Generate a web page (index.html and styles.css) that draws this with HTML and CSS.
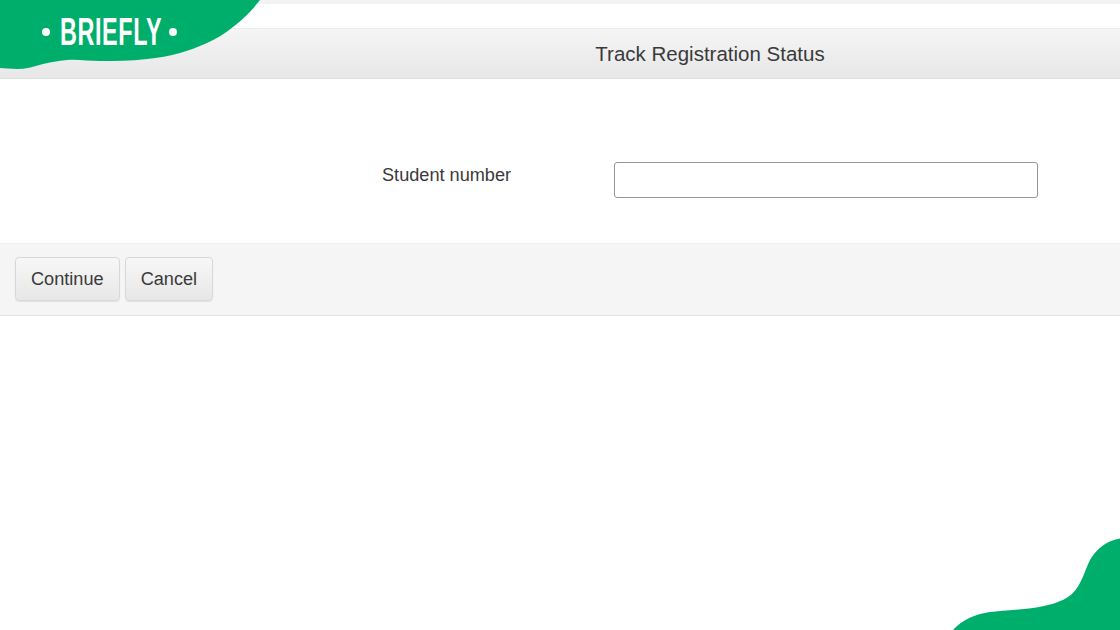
FILE: index.html
```html
<!DOCTYPE html>
<html lang="en">
<head>
<meta charset="utf-8">
<title>Track Registration Status</title>
<link rel="stylesheet" href="styles.css">
</head>
<body>
<div class="top-strip"></div>
<div class="top-gap"></div>
<header class="title-bar"><h1 class="title">Track Registration Status</h1></header>
<main class="form-body">
  <div class="form-row">
    <label class="field-label" for="student">Student number</label>
    <input class="field-input" id="student" type="text">
  </div>
</main>
<footer class="actions">
  <button class="btn" type="button">Continue</button>
  <button class="btn" type="button">Cancel</button>
</footer>

<div class="logo">
  <svg class="logo-shape" width="262" height="72" viewBox="0 0 262 72"><path d="M0 0H260C250 13 241 21 233 27C224 34 216 39 207 43C198 47 190 50 180 53C170 56 158 58 147 59C130 61 115 61 100 61C88 61 78 59 67 60C58 61 50 62 43 64C33 67 25 69 17 69C10 69 5 68 0 68Z" fill="#00ae6b"/></svg>
  <div class="logo-mark"><span class="logo-dot"></span><span class="logo-text">BRIEFLY</span><span class="logo-dot"></span></div>
</div>
<svg class="corner" width="170" height="92" viewBox="0 0 170 92"><path d="M170 .5C155 3 146 12 140 22C134 34 132 46 122 56C112 65 95 68 83 70C65 72 50 73 40 74C25 76 12 82 3 92H170Z" fill="#00ae6b"/></svg>
</body>
</html>
```
FILE: styles.css
```css
* { box-sizing: border-box; }
html, body { margin: 0; padding: 0; }
body {
  width: 1120px;
  height: 630px;
  overflow: hidden;
  position: relative;
  background: #fff;
  color: #3a3a3a;
  font-family: "Liberation Sans", Arial, sans-serif;
}
.top-strip { height: 4px; background: #f3f3f3; }
.top-gap { height: 24px; background: #fff; }
.title-bar {
  height: 51px;
  display: flex;
  align-items: center;
  justify-content: center;
  padding: 1px 0 0 300px;
  border-top: 1px solid #ebebeb;
  border-bottom: 1px solid #dedede;
  background: linear-gradient(#f5f5f5, #e7e7e7);
}
.title { margin: 0; font-size: 20.5px; font-weight: 400; color: #3a3a3a; }
.form-body {
  height: 165px;
  padding: 83px 0 0 382px;
  border-bottom: 1px solid #efefef;
}
.form-row { display: flex; align-items: flex-start; }
.field-label { width: 232px; font-size: 18.15px; line-height: 26px; }
.field-input {
  width: 424px;
  height: 36px;
  border: 1px solid #969696;
  border-radius: 3px;
  background: #fff;
  margin: 0;
}
.actions {
  height: 72px;
  display: flex;
  align-items: flex-start;
  gap: 5px;
  padding: 13px 15px 0;
  background: #f5f5f5;
  border-bottom: 1px solid #e2e2e2;
}
.btn {
  height: 44px;
  padding: 0 15px;
  font: 18.15px "Liberation Sans", Arial, sans-serif;
  color: #3a3a3a;
  border: 1px solid #d8d8d8;
  border-radius: 4px;
  background: linear-gradient(#f7f7f7, #e7e7e7);
  box-shadow: 0 1px 1px rgba(0, 0, 0, .08);
}
.logo { position: absolute; left: 0; top: 0; width: 262px; height: 72px; }
.logo-shape { display: block; }
.logo-mark {
  position: absolute;
  left: 42px;
  top: 13px;
  display: flex;
  align-items: center;
}
.logo-dot { width: 8px; height: 8px; border-radius: 50%; background: #fff; }
.logo-text {
  width: 101px;
  margin: 0 8px 0 10px;
  font-size: 39px;
  line-height: 38px;
  font-weight: 700;
  letter-spacing: 1px;
  color: #fff;
  white-space: nowrap;
  transform: scaleX(.6);
  transform-origin: left center;
}
.corner { position: absolute; right: 0; bottom: 0; display: block; }
```
